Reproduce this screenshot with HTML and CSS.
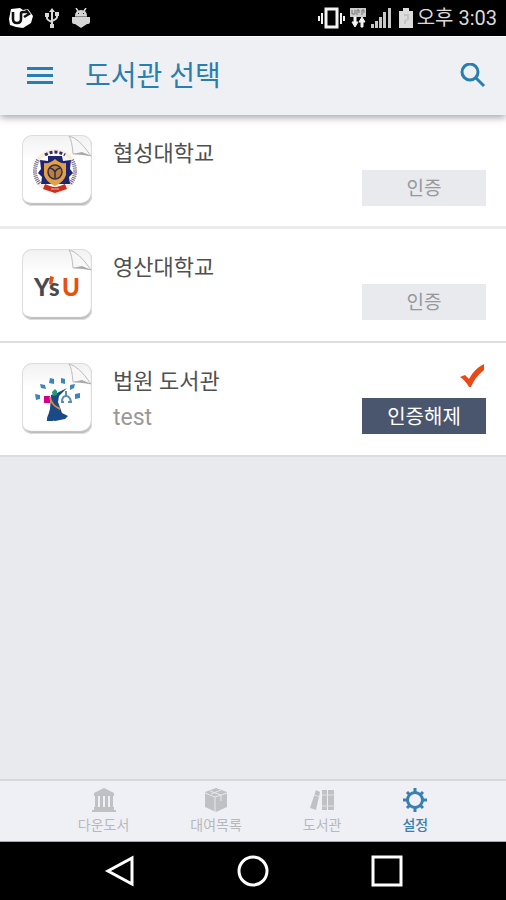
FILE: index.html
```html
<!DOCTYPE html>
<html lang="ko">
<head>
<meta charset="utf-8">
<meta name="viewport" content="width=device-width, initial-scale=1">
<title>도서관 선택</title>
<link rel="stylesheet" href="styles.css">
</head>
<body>
<div class="status">
  <div class="status-group status-left">
    <svg width="24" height="20" viewBox="0 0 24 20"><path d="M2 1 11 0 14 2 19 1 24 8 22 15 14 20 7 19 1 17 0 11Z" fill="#fff"/><path d="M4 4v7q0 4 4 4t4-4V6q0-2 2-2h4M17 2l3 4-5 3" fill="none" stroke="#111" stroke-width="2.6"/></svg>
    <svg width="14" height="20" viewBox="0 0 14 20" fill="none" stroke="#d8d8d8" stroke-width="2"><path d="M7 3v14M2 7v3q0 2 5 4M12 6v3q0 2-5 4"/><path d="M7 0 10 4H4ZM0 5h4v4H0ZM10 4h4v4h-4ZM5 16h4v4H5Z" fill="#d8d8d8" stroke="none"/></svg>
    <svg width="20" height="20" viewBox="0 0 20 20" fill="#d6d6d6"><path d="M4 8Q4 2 10 2t6 6ZM4 8h12v8l-3 2-3 2-3-2-3-2Z"/><path d="M1 9h18v5q0 2-2 2H3q-2 0-2-2Z"/><path d="M5 0 7 3M15 0 13 3" stroke="#d6d6d6" stroke-width="1.5"/><path d="M7 5h1v1H7ZM12 5h1v1h-1Z" fill="#222"/><path d="M4 8.5h12" stroke="#888"/></svg>
  </div>
  <div class="status-group">
    <svg width="27" height="22" viewBox="0 0 27 22" fill="none" stroke="#f2f2f2" stroke-width="2"><rect x="8" y="2" width="11" height="18" stroke-width="3"/><path d="M4 6v11M23 6v11M1 9v5M26 9v5"/></svg>
    <svg width="18" height="22" viewBox="0 0 18 22"><path d="M1 1h16v9H1Z" fill="#ccc"/><path d="M3 3v4h3V3M8 8V3h2v3M13 8V3h2v3" fill="none" stroke="#777"/><path d="M5 10h2v5h2l-3 5-3-5h2ZM12 20h2v-5h2l-3-5-3 5h2Z" fill="#f4f4f4" stroke="#f4f4f4" stroke-width="1"/></svg>
    <svg width="20" height="22" viewBox="0 0 20 22" fill="#c8c8c8"><path d="M0 17h3v4H0ZM4 14h3v7H4ZM8 10h3v11H8ZM12 5h3v16h-3ZM17 1h3v20h-3Z"/></svg>
    <svg class="battery" width="14" height="22" viewBox="0 0 14 22"><path d="M4 1h6v3h4v17H0V4h4Z" fill="#dcdcdc"/><path d="M5 8h4v4l-3 2v3" fill="none" stroke="#c4c4c4" stroke-width="2"/></svg>
    <span class="clock">오후 3:03</span>
  </div>
</div>

<header class="header">
  <button class="icon-button" type="button" aria-label="메뉴"><svg width="26" height="18" viewBox="0 0 26 18" fill="#287faf"><path d="M0 0h26v3H0ZM0 7h26v3H0ZM0 14h26v3H0Z"/></svg></button>
  <h1 class="title">도서관 선택</h1>
  <button class="icon-button" type="button" aria-label="검색"><svg width="26" height="26" viewBox="0 0 26 26" fill="none" stroke="#287faf" stroke-width="3"><circle cx="10" cy="9" r="8"/><path d="m16 15 8 8"/></svg></button>
</header>

<main class="main">
  <ul class="libraries">
    <li class="library">
      <div class="logo">
        <svg width="70" height="70" viewBox="0 0 70 70">
          <path d="M47 1q3 4 4 18 10-2 18 2Q57 3 47 1Z" fill="#f7f7f7" stroke="#bdbdbd"/><path d="m51 19 18 2-9-4Z" fill="#aaa"/>
          <circle cx="33" cy="36" r="20" fill="none" stroke="#fbecd8" stroke-width="4"/>
          <path d="M23 20q10-6 20 0" fill="none" stroke="#2b2d7c" stroke-width="3" stroke-dasharray="3 2"/>
          <path d="M16 25q-7 13 2 24M50 25q7 13-2 24" fill="none" stroke="#6668a0" stroke-width="4" stroke-dasharray="1 1"/>
          <path d="M26 21h14l1 5 8-1-1 9 3 4-4 4 1 7H19l1-7-4-4 3-4-1-9 8 1Z" fill="#1d2470"/>
          <path d="M22 28q6 1 11-4 5 5 11 4v12q-2 7-11 11-9-4-11-11Z" fill="#e3a044"/>
          <circle cx="33" cy="37" r="7" fill="#bd8034" stroke="#352f50" stroke-width="1.5"/><path d="M28 33q4 1 5 4 1-3 5-4M33 37v6" fill="none" stroke="#292c63" stroke-width="1.5"/>
          <path d="m23 49 5 2q5 2 10 0l5-2 2 5-6 2-6 2-6-2-6-2Z" fill="#c82f20"/><path d="M29 54h8" stroke="#f3b8a0"/>
        </svg>
      </div>
      <div class="info"><h2 class="name">협성대학교</h2></div>
      <div class="actions"><button class="auth" type="button">인증</button></div>
    </li>
    <li class="library">
      <div class="logo">
        <svg width="70" height="70" viewBox="0 0 70 70">
          <path d="M47 1q3 4 4 18 10-2 18 2Q57 3 47 1Z" fill="#f7f7f7" stroke="#bdbdbd"/><path d="m51 19 18 2-9-4Z" fill="#aaa"/>
          <g class="wordmark"><text x="12" y="47" fill="#494a4e">Y</text><text x="27" y="47" fill="#494a4e">s</text><text x="40" y="47" fill="#e94e12">U</text></g>
          <path d="m28 27 4 1-2 8-3-1Z" fill="#e94e12"/>
        </svg>
      </div>
      <div class="info"><h2 class="name">영산대학교</h2></div>
      <div class="actions"><button class="auth" type="button">인증</button></div>
    </li>
    <li class="library">
      <div class="logo">
        <svg width="70" height="70" viewBox="0 0 70 70">
          <path d="M47 1q3 4 4 18 10-2 18 2Q57 3 47 1Z" fill="#f7f7f7" stroke="#bdbdbd"/><path d="m51 19 18 2-9-4Z" fill="#aaa"/>
          <g fill="#3a86ba"><path d="m13 31 5 1v4l-4 1ZM18 21l5 1 1 4-5-1ZM28 15l4 1v5l-5-1ZM39 15l4 1v5l-4-1ZM48 22l5-1-1 4-4 2ZM53 31l5-1v5l-5 1Z"/></g>
          <path d="m29 32 6-2 10-5-8 8-1 6 4 11 6 3-3 3-10 2-8-2 3-10Z" fill="#174a87"/>
          <path d="M22 33h6v7h-6Z" fill="#d0008a"/><path d="m30 29 3-3 2 2v4l-4 1Z" fill="#249a72"/>
          <path d="M28 34q1 8 10 12" fill="none" stroke="#e2853a" stroke-width="2"/><path d="m27 52-1 5h5" fill="none" stroke="#174a87" stroke-width="2"/>
          <path d="M44 28v6m-4 5q0-6 4-6 4 0 5 6m-10 0h3m4 0h4" fill="none" stroke="#5a8cb5" stroke-width="2"/>
        </svg>
      </div>
      <div class="info"><h2 class="name">법원 도서관</h2><p class="account">test</p></div>
      <div class="actions">
        <svg class="check" width="26" height="24" viewBox="0 0 26 24"><path d="m0 13 5-2 4 4Q14 5 24 0v6Q15 13 11 23H9Q5 16 0 13Z" fill="#e84915"/></svg>
        <button class="auth auth-active" type="button">인증해제</button>
      </div>
    </li>
  </ul>
</main>

<nav class="tabs">
  <a class="tab" href="#downloads"><svg width="24" height="24" viewBox="0 0 24 24" fill="#c0c1c4"><path d="M0 22h24v2H0ZM2 19h20v3H2ZM12 0 22 5v3H2V5ZM3 8h3v11H3ZM8 8h3v11H8ZM13 8h3v11h-3ZM18 8h3v11h-3Z"/></svg><span>다운도서</span></a>
  <a class="tab" href="#loans"><svg width="24" height="24" viewBox="0 0 24 24"><path d="M12 0 23 4v15l-11 5-11-5V4Z" fill="#c0c1c4"/><path d="m1 5 10 4 12-4M11 9v15M6 3l11 4v6M17 2 7 6" fill="none" stroke="#e8e8ec"/></svg><span>대여목록</span></a>
  <a class="tab" href="#library"><svg width="26" height="24" viewBox="0 0 26 24"><path d="m7 2 4 2-4 18-6-2ZM13 2h5v20h-5ZM19 2h6v20h-6Z" fill="#c0c1c4"/><path d="m5 7 6 2M13 7h13M13 18h13" stroke="#e0e1e4"/></svg><span>도서관</span></a>
  <a class="tab tab-active" href="#settings"><svg width="24" height="24" viewBox="0 0 24 24" fill="none" stroke="#397fb0"><circle cx="12" cy="12" r="7.5" stroke-width="3"/><path d="M12 0v5M12 19v5M0 12h5M19 12h5M4 4l3 3M17 17l3 3M20 4l-3 3M7 17l-3 3" stroke-width="3"/></svg><span>설정</span></a>
</nav>

<div class="system-nav">
  <button class="icon-button" type="button" aria-label="뒤로"><svg width="32" height="32" viewBox="0 0 32 32" fill="none" stroke="#fff" stroke-width="3"><path d="M29 3v26L5 16Z"/></svg></button>
  <button class="icon-button" type="button" aria-label="홈"><svg width="32" height="32" viewBox="0 0 32 32" fill="none" stroke="#fff" stroke-width="3"><circle cx="16" cy="16" r="14"/></svg></button>
  <button class="icon-button" type="button" aria-label="최근 앱"><svg width="32" height="32" viewBox="0 0 32 32" fill="none" stroke="#fff" stroke-width="3"><path d="M2 2h28v28H2Z"/></svg></button>
</div>
</body>
</html>
```

FILE: styles.css
```css
* { box-sizing: border-box; }
body {
  margin: 0;
  min-height: 100vh;
  display: flex;
  flex-direction: column;
  background: #e8eaee;
  font-family: Roboto, "Noto Sans CJK KR", sans-serif;
}
svg { display: block; }
button { font: inherit; border: 0; padding: 0; }
h1, h2, p, ul { margin: 0; padding: 0; font-weight: 400; }

.status {
  height: 36px;
  padding: 0 9px;
  display: flex;
  align-items: center;
  justify-content: space-between;
  background: #000;
}
.status-group { display: flex; align-items: center; gap: 4px; }
.status-left { gap: 12px; }
.battery { margin-left: 4px; }
.clock { color: #dadada; font-size: 20px; line-height: 24px; }

.header {
  height: 79px;
  padding: 0 20px 0 27px;
  display: flex;
  align-items: center;
  background: #eef0f4;
  border-top: 1px solid #fff;
  box-shadow: 0 2px 8px rgba(0, 0, 0, .4);
  z-index: 1;
}
.icon-button { background: none; cursor: pointer; }
.title {
  flex: 1;
  margin-left: 32px;
  padding-top: 2px;
  color: #287faf;
  font-size: 28px;
  line-height: 40px;
}

.main { flex: 1; }
.libraries { list-style: none; }
.library {
  height: 114px;
  padding: 20px 20px 20px 22px;
  display: flex;
  background: #fff;
  border-bottom: 2px solid #dcdddf;
}
.library:first-child { border-bottom: 3px solid #ebebeb; }
.logo {
  width: 70px;
  height: 71px;
  border-radius: 10px;
  background: linear-gradient(#f1f1f1, #fff 35%);
  box-shadow: inset 0 0 0 1px #ddd, inset -1px -3px 1px #bdbdbd;
}
.wordmark { font-family: Lato, sans-serif; font-size: 24px; font-weight: 900; }
.info { flex: 1; margin-left: 21px; }
.name { color: #505050; font-size: 22px; line-height: 38px; }
.account { color: #999; font-size: 23px; line-height: 34px; }
.actions {
  height: 71px;
  display: flex;
  flex-direction: column;
  align-items: flex-end;
  justify-content: flex-end;
  gap: 10px;
}
.auth {
  width: 124px;
  height: 36px;
  padding-top: 2px;
  background: #e8eaed;
  color: #96989c;
  font-size: 19px;
  line-height: 34px;
  cursor: pointer;
}
.auth-active { background: #49566d; color: #fff; font-size: 20px; }

.tabs {
  height: 63px;
  padding-top: 7px;
  display: flex;
  justify-content: center;
  gap: 61px;
  background: #eff0f5;
  border-top: 2px solid #d7d8dc;
  border-bottom: 1px solid #aaa;
}
.tab {
  display: flex;
  flex-direction: column;
  align-items: center;
  color: #b7b8bb;
  font-size: 14px;
  line-height: 26px;
  text-decoration: none;
}
.tab-active { color: #397fb0; font-weight: 500; }

.system-nav {
  height: 58px;
  display: flex;
  align-items: center;
  justify-content: center;
  gap: 102px;
  background: #000;
}
```
